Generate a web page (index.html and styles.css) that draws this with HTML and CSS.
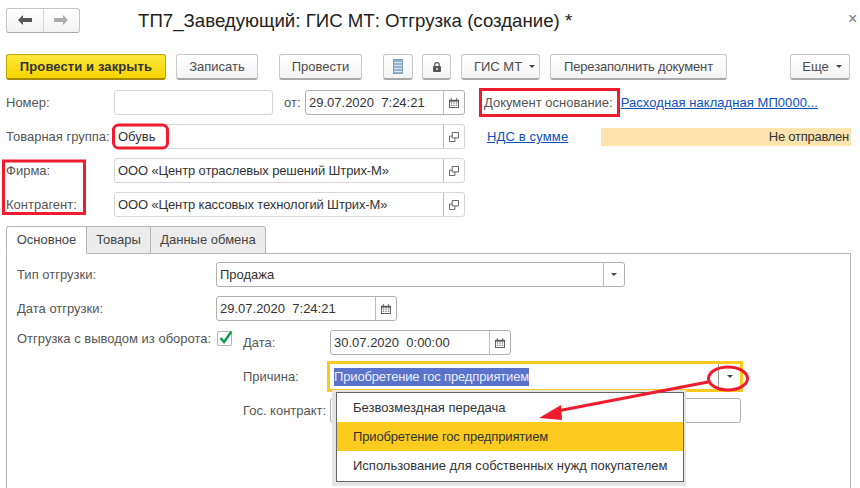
FILE: index.html
```html
<!DOCTYPE html>
<html lang="ru">
<head>
<meta charset="utf-8">
<title>ТП7_Заведующий: ГИС МТ: Отгрузка (создание) *</title>
<link rel="stylesheet" href="styles.css">
</head>
<body>
<div class="window">
  <header class="head">
    <div class="nav">
      <button class="nav-btn"><svg width="14" height="10" viewBox="0 0 14 10"><path d="M0 5l5-5v3h9v4H5v3z" fill="#555"/></svg></button>
      <button class="nav-btn"><svg width="14" height="10" viewBox="0 0 14 10"><path d="M14 5L9 0v3H0v4h9v3z" fill="#aaa"/></svg></button>
    </div>
    <h1 class="title">ТП7_Заведующий: ГИС МТ: Отгрузка (создание) *</h1>
    <span class="close">×</span>
  </header>

  <div class="toolbar">
    <button class="btn primary w-post">Провести и закрыть</button>
    <button class="btn w-save">Записать</button>
    <button class="btn w-run">Провести</button>
    <button class="btn w-icon"><svg width="10" height="15" viewBox="0 0 10 15"><rect x=".5" y=".5" width="9" height="14" fill="#8fb3d0" stroke="#7c9db8"/><path d="M1 3.500h8M1 6.500h8M1 9.500h8M1 12.500h8" stroke="#dce8f2"/></svg></button>
    <button class="btn w-lock"><svg width="8" height="10" viewBox="0 0 8 10"><path d="M1.700 4.500V2.800a2.300 2.300 0 0 1 4.600 0v1.700" fill="none" stroke="#666" stroke-width="1.300"/><rect x="0" y="4" width="8" height="6" rx="1" fill="#555"/><rect x="3" y="6" width="2" height="2" fill="#ccc"/></svg></button>
    <button class="btn w-gis">ГИС МТ<i class="caret"></i></button>
    <button class="btn w-fill">Перезаполнить документ</button>
    <button class="btn w-more">Еще<i class="caret"></i></button>
  </div>

  <div class="row r-number">
    <label class="lbl lbl-main">Номер:</label>
    <div class="field w-num"></div>
    <label class="lbl lbl-from">от:</label>
    <div class="field w-date"><span class="val">29.07.2020&nbsp; 7:24:21</span><span class="addon"><svg class="ico" viewBox="0 0 11 11"><use href="#cal"/></svg></span></div>
    <label class="lbl lbl-base">Документ основание:</label>
    <a class="link link-base">Расходная накладная МП0000...</a>
  </div>

  <div class="row r-group">
    <label class="lbl lbl-main">Товарная группа:</label>
    <div class="field w-wide"><span class="val">Обувь</span><span class="addon"><svg class="ico" viewBox="0 0 11 11"><use href="#open"/></svg></span></div>
    <a class="link link-vat">НДС в сумме</a>
    <div class="status">Не отправлен</div>
  </div>

  <div class="row r-firm">
    <label class="lbl lbl-main">Фирма:</label>
    <div class="field w-wide"><span class="val tight">ООО «Центр отраслевых решений Штрих-М»</span><span class="addon"><svg class="ico" viewBox="0 0 11 11"><use href="#open"/></svg></span></div>
  </div>

  <div class="row r-firm">
    <label class="lbl lbl-main">Контрагент:</label>
    <div class="field w-wide"><span class="val tight">ООО «Центр кассовых технологий Штрих-М»</span><span class="addon"><svg class="ico" viewBox="0 0 11 11"><use href="#open"/></svg></span></div>
  </div>

  <div class="tabs">
    <div class="tab active">Основное</div>
    <div class="tab t2">Товары</div>
    <div class="tab t3">Данные обмена</div>
  </div>

  <section class="panel">
    <div class="prow">
      <label class="lbl lbl-p">Тип отгрузки:</label>
      <div class="field w-type"><span class="val">Продажа</span><span class="addon"><i class="caret solo"></i></span></div>
    </div>
    <div class="prow">
      <label class="lbl lbl-p">Дата отгрузки:</label>
      <div class="field w-date2"><span class="val">29.07.2020&nbsp; 7:24:21</span><span class="addon"><svg class="ico" viewBox="0 0 11 11"><use href="#cal"/></svg></span></div>
    </div>
    <div class="prow p-out">
      <label class="lbl lbl-p lbl-out">Отгрузка с выводом из оборота:</label>
      <span class="check"><svg width="18" height="18" viewBox="0 0 18 18"><path d="M3.500 8l3.500 4L14.500 1.500" fill="none" stroke="#0d9a4e" stroke-width="2.400"/></svg></span>
      <div class="sub">
        <div class="srow">
          <label class="lbl lbl-s">Дата:</label>
          <div class="field w-date2"><span class="val">30.07.2020&nbsp; 0:00:00</span><span class="addon"><svg class="ico" viewBox="0 0 11 11"><use href="#cal"/></svg></span></div>
        </div>
        <div class="srow">
          <label class="lbl lbl-s">Причина:</label>
          <div class="field focus"><span class="val"><span class="sel">Приобретение гос предприятием</span></span><span class="addon"><i class="caret solo"></i></span></div>
        </div>
        <div class="srow">
          <label class="lbl lbl-s">Гос. контракт:</label>
          <div class="field w-contract"></div>
        </div>
      </div>
    </div>
  </section>

  <ul class="menu">
    <li>Безвозмездная передача</li>
    <li class="on">Приобретение гос предприятием</li>
    <li>Использование для собственных нужд покупателем</li>
  </ul>

  <svg class="marks" width="860" height="488" viewBox="0 0 860 488">
    <g fill="none" stroke="#ee1c2e" stroke-width="3">
      <rect x="480.500" y="89.500" width="138" height="26"/>
      <rect x="113.500" y="125" width="54" height="23" rx="5"/>
      <rect x="3.500" y="161" width="81" height="52.500"/>
      <ellipse cx="728" cy="378.500" rx="19.500" ry="11.500"/>
      <path d="M708 382L552 412"/>
    </g>
    <path d="M539 418L561 405L562 420z" fill="#ee1c2e"/>
  </svg>

  <svg class="defs" width="0" height="0">
    <symbol id="cal" viewBox="0 0 11 11"><path d="M0 2h11v9H0z" fill="#555"/><path d="M2 0h1v3H2zM8 0h1v3H8z" fill="#555"/><path d="M1 4h9v6H1z" fill="#fff"/><path d="M2 5h1.500v1H2zM4.800 5h1.500v1H4.800zM7.500 5h1.500v1H7.500zM2 7.500h1.500v1H2zM4.800 7.500h1.500v1H4.800zM7.500 7.500h1.500v1H7.500z" fill="#555"/></symbol>
    <symbol id="open" viewBox="0 0 11 11"><path d="M3.500.5h7v6h-7zM.5 4.500h3M.5 4.500v6h6v-4" fill="none" stroke="#555"/></symbol>
  </svg>
</div>
</body>
</html>
```

FILE: styles.css
```css
* { box-sizing: border-box; }
html, body { margin: 0; background: #fff; }
.window {
  position: relative;
  width: 860px;
  height: 488px;
  overflow: hidden;
  font: 13px "Liberation Sans", Arial, sans-serif;
  color: #333;
}
.head { display: flex; align-items: center; height: 44px; padding: 8px 0 12px 6px; }
.nav {
  display: flex;
  width: 74px;
  height: 25px;
  border: 1px solid #c4c4c4;
  border-bottom-color: #a8a8a8;
  border-radius: 3px;
  background: linear-gradient(#fff, #f2f2f2);
}
.nav-btn { flex: 1; padding: 0; border: 0; background: none; display: flex; align-items: center; justify-content: center; }
.nav-btn + .nav-btn { border-left: 1px solid #d4d4d4; }
.title { margin: 2px 0 0 58px; font-size: 18.670px; font-weight: 400; color: #222; white-space: nowrap; }
.close { margin: 0 0 3px auto; width: 12px; font-size: 16px; color: #777; }

.toolbar { display: flex; height: 36px; padding: 10px 0 0 6px; }
.btn {
  display: flex;
  align-items: center;
  justify-content: center;
  height: 26px;
  padding: 0;
  border: 1px solid #c9c9c9;
  border-bottom: 2px solid #a9a9a9;
  border-radius: 3px;
  background: linear-gradient(#fff, #f4f4f4);
  font: inherit;
  color: #4c4c4c;
}
.primary {
  border-color: #c2a400;
  border-bottom-color: #a38a00;
  background: linear-gradient(#ffe83a, #f5d400);
  font-weight: 700;
  letter-spacing: .11px;
  color: #333;
}
.w-post { width: 160px; margin-right: 10px; }
.w-save { width: 82px; margin-right: 21px; }
.w-run { width: 83px; margin-right: 21px; }
.w-icon { width: 30px; margin-right: 9px; }
.w-lock { width: 29px; margin-right: 10px; }
.w-gis { width: 79px; margin-right: 10px; padding-left: 8px; }
.w-fill { width: 177px; margin-right: 63px; letter-spacing: -.17px; }
.w-more { width: 60px; padding-left: 4px; }
.caret {
  display: inline-block;
  width: 0;
  height: 0;
  margin-left: 7px;
  border: 3px solid transparent;
  border-top: 3px solid #444;
  border-bottom: 0;
}
.caret.solo { margin: 0; }

.row { display: flex; align-items: center; padding-left: 6px; }
.r-number { height: 25px; margin-top: 10px; }
.r-group { height: 25px; margin-top: 9px; }
.r-firm { height: 25px; margin-top: 9px; }
.lbl { color: #555; white-space: nowrap; }
.lbl-main { width: 108px; }
.lbl-from { width: 32px; padding-left: 11px; }
.lbl-base { margin-left: 19px; }
.field {
  display: flex;
  align-items: stretch;
  height: 25px;
  border: 1px solid #d6d6d6;
  border-radius: 3px;
  background: #fff;
}
.val { flex: 1; display: flex; align-items: center; padding-left: 3px; color: #333; white-space: nowrap; overflow: hidden; }
.tight { letter-spacing: -.13px; }
.addon { width: 21px; display: flex; align-items: center; justify-content: center; border-left: 1px solid #bdbdbd; }
.ico { width: 10px; height: 10px; }
.w-num { width: 159px; }
.w-date { width: 160px; border-color: #b0b0b0; }
.w-wide { width: 351px; }
.link { color: #0b4fc0; text-decoration: underline; white-space: nowrap; }
.link-base { margin-left: 8px; letter-spacing: .06px; }
.link-vat { margin-left: 22px; width: 114px; letter-spacing: .15px; }
.status { width: 250px; height: 18px; line-height: 18px; padding-right: 2px; background: #fde3ae; color: #333; letter-spacing: -.25px; text-align: right; white-space: nowrap; }

.tabs { display: flex; height: 28px; margin-top: 9px; padding-left: 6px; position: relative; z-index: 1; }
.tab {
  width: 64px;
  height: 28px;
  line-height: 26px;
  text-align: center;
  border: 1px solid #b5b5b5;
  border-left: 0;
  background: #ececec;
  color: #444;
}
.tab.active { width: 81px; background: #fff; border-left: 1px solid #b5b5b5; border-bottom-color: #fff; border-radius: 3px 0 0 0; }
.t3 { width: 115px; border-radius: 0 3px 0 0; }
.panel {
  width: 845px;
  height: 235px;
  margin: -1px 0 0 6px;
  padding: 8px 0 0 10px;
  border: 1px solid #b5b5b5;
  border-bottom: 0;
}
.prow { display: flex; align-items: center; height: 25px; margin-bottom: 9px; }
.lbl-p { width: 199px; }
.w-type { width: 409px; border-color: #b0b0b0; }
.w-date2 { width: 181px; border-color: #b0b0b0; }
.p-out { align-items: flex-start; height: auto; }
.lbl-out { margin-top: 1px; }
.check {
  position: relative;
  width: 15px;
  height: 15px;
  margin: 1px 0 0 1px;
  border: 1px solid #b5b5b5;
  border-radius: 2px;
}
.check svg { position: absolute; left: -1px; top: -2px; }
.sub { margin-left: 11px; display: flex; flex-direction: column; gap: 6px; }
.srow { display: flex; align-items: center; }
.lbl-s { width: 87px; }
.focus { width: 416px; height: 31px; margin-left: -3px; border: 3px solid #fbc91e; border-radius: 0; }
.focus .val { padding-left: 4px; }
.sel { background: #5873c9; color: #eaf0ff; line-height: 18px; letter-spacing: -.15px; }
.focus .addon { border-left-color: #999; width: 22px; }
.w-contract { width: 411px; border-color: #b0b0b0; }

.menu {
  position: absolute;
  left: 336px;
  top: 392px;
  width: 348px;
  height: 90px;
  margin: 0;
  padding: 0;
  list-style: none;
  border: 1px solid #666;
  background: #fff;
  box-shadow: -1px 1px 0 3px #e4e4e4;
}
.menu li { height: 29px; line-height: 29px; padding-left: 16px; color: #333; white-space: nowrap; }
.menu li.on { background: #fbcb1f; letter-spacing: -.15px; }
.marks { position: absolute; left: 0; top: 0; pointer-events: none; }
.defs { position: absolute; }
```
